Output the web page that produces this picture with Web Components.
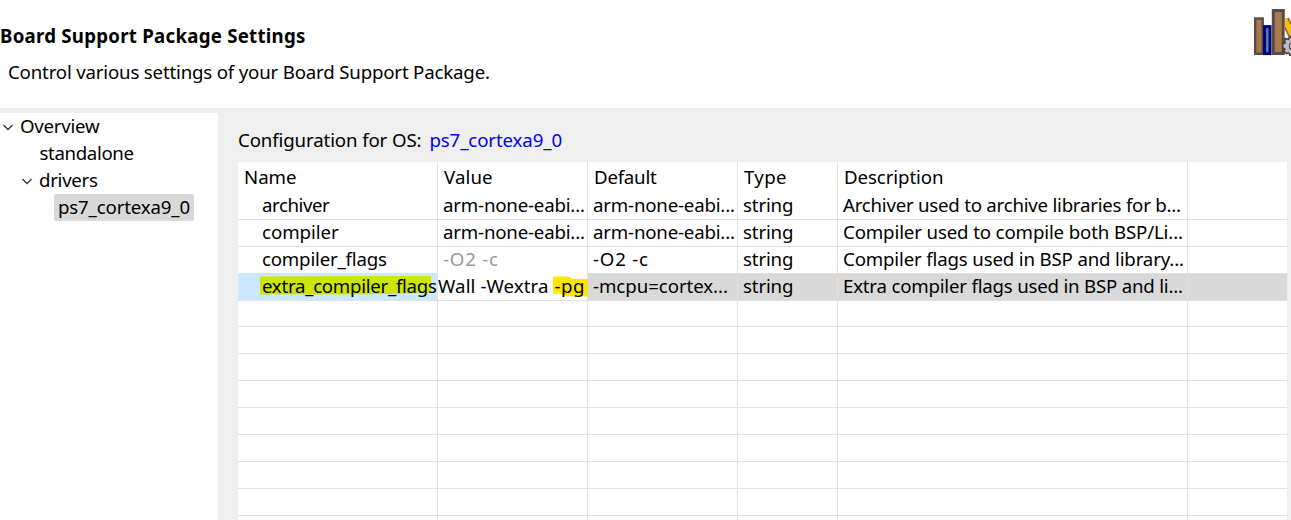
<!DOCTYPE html>
<html lang="en"><head><meta charset="utf-8"><title>Board Support Package Settings</title>
<style>
html,body{margin:0;height:100%;overflow:hidden;background:#fff}
body{font:18.67px/27px "Noto Sans","Open Sans",sans-serif;color:#000}
</style></head><body>
<bsp-dialog></bsp-dialog>
<script>
const ctx = document.createElement('canvas').getContext('2d');
function define(name, html, ready){
  customElements.define(name, class extends HTMLElement{
    connectedCallback(){
      if(this.shadowRoot) return;
      const t=document.createElement('template'); t.innerHTML=html;
      this.attachShadow({mode:'open'}).append(t.content.cloneNode(true));
      if(ready) ready.call(this,this.shadowRoot);
    }
  });
}
// A single-line label whose ink spans exactly the width given in "w"; "dx" nudges its start.
define('ui-label','<style>:host{display:block;white-space:pre;line-height:25px;padding-bottom:2px;flex:none}</style><slot></slot>',function(){
  const s=getComputedStyle(this), text=this.textContent;
  ctx.font=`${s.fontWeight} ${s.fontSize} ${s.fontFamily}`;
  const m=ctx.measureText(text), ink=m.actualBoundingBoxRight+m.actualBoundingBoxLeft;
  this.style.letterSpacing=((+this.getAttribute('w')-ink)/(text.length-1))+'px';
  this.style.marginLeft=(m.actualBoundingBoxLeft+(+this.getAttribute('dx')||0))+'px';
});
define('books-icon',`<style>:host{display:block;width:37px;height:47px}svg{display:block}</style>
<svg width="37" height="47" viewBox="0 0 37 47">
<rect x="1.2" y="9.5" width="7.5" height="35.3" fill="#a87848" stroke="#574b47" stroke-width="2.4"/>
<rect x="19.3" y="1.5" width="10" height="43" fill="#a87b50" stroke="#574b47" stroke-width="3"/>
<rect x="10.6" y="17.6" width="5.4" height="27" fill="#4a8cae" stroke="#00007d" stroke-width="3"/>
<path d="M30.8 9h3.7L37 14v18l-6.2-13z" fill="#f9bc20"/><path d="M30.8 20l6.2 9v6l-6.2-7z" fill="#fff"/><path d="M34 9l3 6M30.8 18.5L37 31" stroke="#9b6a2e" stroke-width="1.7"/>
<path d="M38 28h-2.5l-1 2.3-3-.8-1 2.5.8 2-2.6 1.2v3.6l2.3 1.2-1 2.4 2.5 2.2 2.2-.8 1.3 2.4h2z" fill="#bdbdbd" stroke="#3c3c3c" stroke-width="1.4"/>
<path d="M38 33.5a4 4 0 0 0 0 7.4z" fill="#fff" stroke="#444" stroke-width="1.4"/></svg>`);
define('dialog-header',`<style>:host{display:flex;justify-content:space-between;height:108px;background:#fff;overflow:hidden}
.t{padding:23px 0 0 1px}.b{font-weight:700}.s{padding:9px 0 0 7px}books-icon{margin-top:9px}</style>
<div class="t"><ui-label class="b" w="304">Board Support Package Settings</ui-label><div class="s"><ui-label dx="1" w="480">Control various settings of your Board Support Package.</ui-label></div></div><books-icon></books-icon>`);
define('tree-item',`<style>:host{display:flex;height:27px;padding-left:var(--indent)}svg{flex:none;width:12px;height:27px;margin-right:6px}
.box{padding:0 4px;border-radius:2px;margin-left:-4px;display:flex}:host([selected]) .box{background:#d9d9d9;width:132px}:host(:not([open])) svg{visibility:hidden}</style>
<svg viewBox="0 0 12 27"><path d="M1.5 12L6 16.5l4.5-4.5" fill="none" stroke="#333" stroke-width="1.3"/></svg><div class="box"><slot></slot></div>`);
define('settings-tree',`<style>:host{display:block;width:218px;background:#fff;flex:none}</style>
<tree-item open style="--indent:2px"><ui-label dx="1" w="79">Overview</ui-label></tree-item>
<tree-item style="--indent:21px"><ui-label dx=".5" w="94">standalone</ui-label></tree-item>
<tree-item open style="--indent:21px"><ui-label dx="1" w="58">drivers</ui-label></tree-item>
<tree-item selected style="--indent:40px"><ui-label dx="1" w="130.5">ps7_cortexa9_0</ui-label></tree-item>`);
define('table-cell',`<style>:host{display:flex;box-sizing:border-box;border-right:1px solid #e1e1e1;border-bottom:1px solid #e1e1e1;padding-left:var(--pad,5px);min-width:0;position:relative}
:host(:last-child){border-right:0}
:host([muted]){color:#999}:host([active]){background:#cce8ff}:host([editing]){background:#fff}</style><slot></slot>`);
define('table-row',`<style>:host{display:grid;grid-template-columns:200px 150px 150px 100px 350px 99px;height:27px}
:host([head]){height:30px}:host([selected]){background:#d9d9d9}
:host([head]) ::slotted(table-cell){border-bottom:0;padding-top:2px;--pad:7px}</style><slot></slot>`);
define('settings-table',`<style>:host{display:block;width:1049px;background:#fff;margin-top:8px}
.n{--pad:24px}.mark{position:absolute;display:block}.green{left:22px;top:3px}.yellow{right:-1px;top:3px}ui-label{position:relative}
.edit{display:flex;gap:6px}</style>
<table-row head><table-cell><ui-label w="51">Name</ui-label></table-cell><table-cell><ui-label dx="-1" w="48">Value</ui-label></table-cell><table-cell><ui-label w="62">Default</ui-label></table-cell><table-cell><ui-label dx="-1" w="42">Type</ui-label></table-cell><table-cell><ui-label w="98">Description</ui-label></table-cell><table-cell></table-cell></table-row>
<table-row><table-cell class="n"><ui-label w="68">archiver</ui-label></table-cell><table-cell><ui-label w="141">arm-none-eabi...</ui-label></table-cell><table-cell><ui-label w="141">arm-none-eabi...</ui-label></table-cell><table-cell><ui-label w="49">string</ui-label></table-cell><table-cell><ui-label w="337">Archiver used to archive libraries for b...</ui-label></table-cell><table-cell></table-cell></table-row>
<table-row><table-cell class="n"><ui-label dx="1" w="76">compiler</ui-label></table-cell><table-cell><ui-label w="141">arm-none-eabi...</ui-label></table-cell><table-cell><ui-label w="141">arm-none-eabi...</ui-label></table-cell><table-cell><ui-label w="49">string</ui-label></table-cell><table-cell><ui-label dx="1" w="338">Compiler used to compile both BSP/Li...</ui-label></table-cell><table-cell></table-cell></table-row>
<table-row><table-cell class="n"><ui-label dx="1" w="124">compiler_flags</ui-label></table-cell><table-cell muted><ui-label w="55">-O2 -c</ui-label></table-cell><table-cell><ui-label w="55">-O2 -c</ui-label></table-cell><table-cell><ui-label w="49">string</ui-label></table-cell><table-cell><ui-label dx="1" w="339">Compiler flags used in BSP and library...</ui-label></table-cell><table-cell></table-cell></table-row>
<table-row selected><table-cell class="n" active><svg class="mark green" width="171" height="19"><path d="M0 .5L171 0V17L100 18.5H0z" fill="#cbe600"/></svg><ui-label dx="1" w="174">extra_compiler_flags</ui-label></table-cell><table-cell editing style="--pad:0px"><svg class="mark yellow" width="35" height="21"><path d="M0 .5H15L20 3H35V20.5H14L6 17.5H0z" fill="#ffe600"/></svg><div class="edit"><ui-label w="109">Wall -Wextra</ui-label><ui-label w="28.5">-pg</ui-label></div></table-cell><table-cell><ui-label w="134">-mcpu=cortex...</ui-label></table-cell><table-cell><ui-label w="49">string</ui-label></table-cell><table-cell><ui-label dx="1" w="338">Extra compiler flags used in BSP and li...</ui-label></table-cell><table-cell></table-cell></table-row>`,function(root){
  for(let i=0;i<9;i++){const r=document.createElement('table-row');for(let c=0;c<6;c++)r.append(document.createElement('table-cell'));root.append(r);}
});
define('settings-panel',`<style>:host{display:block;margin-left:20px;padding-top:14px}.c{display:flex;gap:9px}.u{color:#00f}</style>
<div class="c"><ui-label dx="1" w="181.5">Configuration for OS:</ui-label><ui-label class="u" w="131">ps7_cortexa9_0</ui-label></div><settings-table></settings-table>`);
define('bsp-dialog',`<style>:host{display:flex;flex-direction:column;height:520px;width:1291px;overflow:hidden;background:#efefef}.m{display:flex;flex:1;min-height:0;margin-top:5px}</style>
<dialog-header></dialog-header><div class="m"><settings-tree></settings-tree><settings-panel></settings-panel></div>`);
</script></body></html>
